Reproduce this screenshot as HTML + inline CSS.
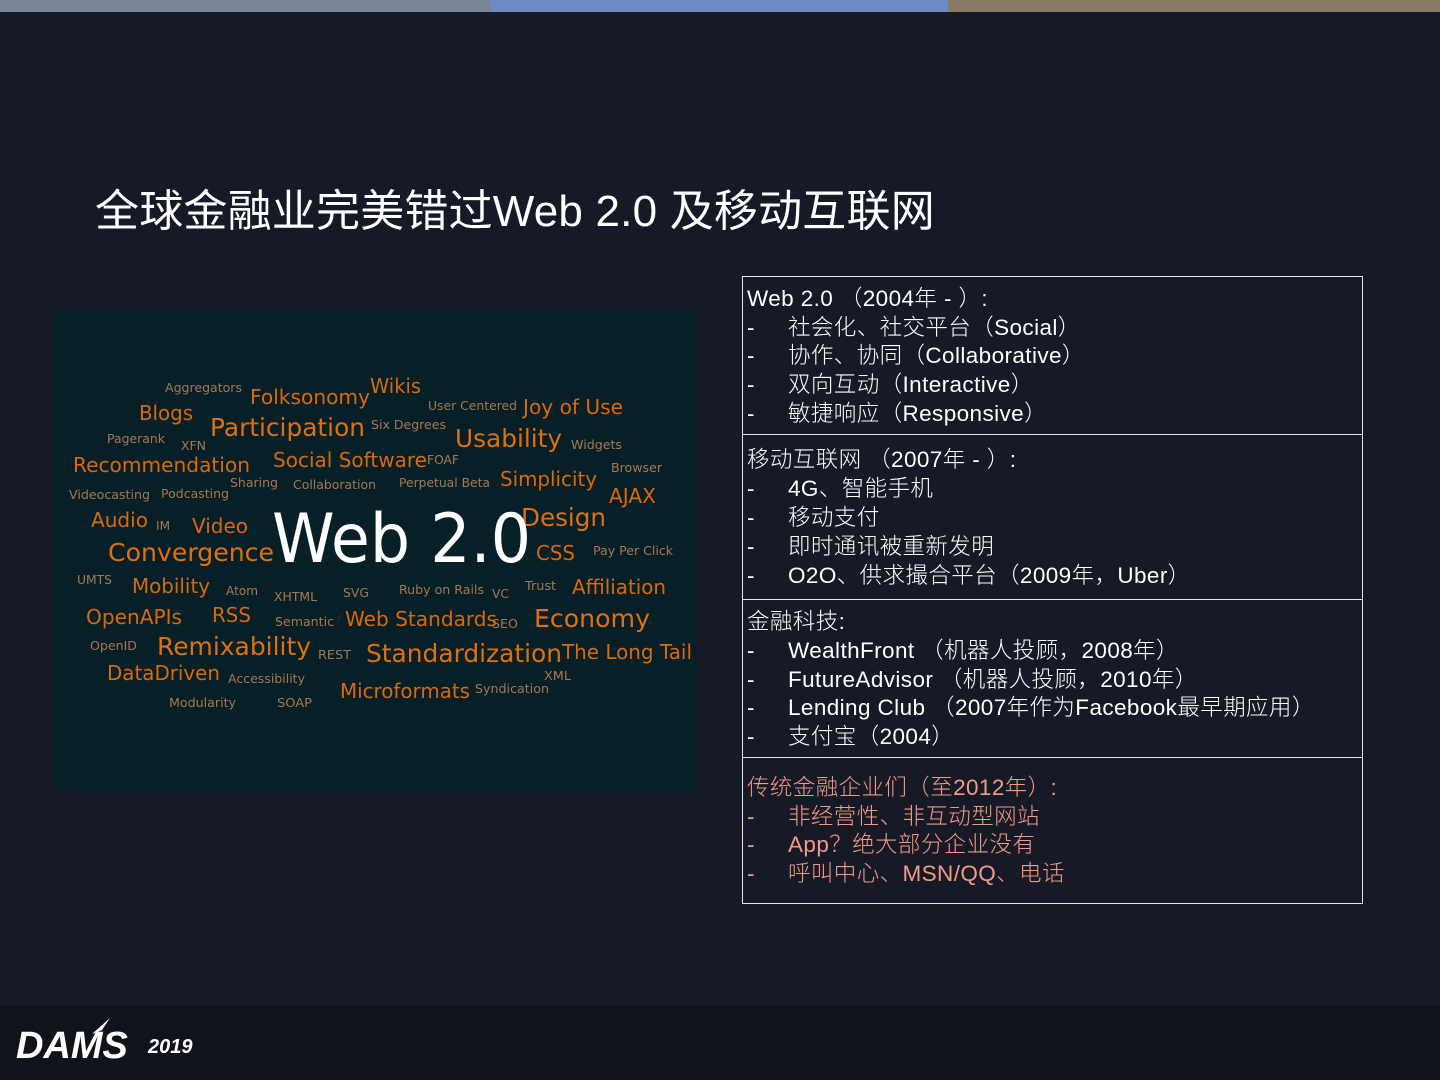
<!DOCTYPE html>
<html><head><meta charset="utf-8"><style>
body{margin:0;width:1440px;height:1080px;background:#161a26;position:relative;overflow:hidden;font-family:"Liberation Sans","Noto Sans CJK SC",sans-serif;color:#fff}
.bar{position:absolute;top:0;height:12px}
.title{position:absolute;left:95px;top:184px;font-size:44px;line-height:56px;white-space:nowrap;letter-spacing:0.2px;font-family:"Liberation Sans","Noto Sans CJK SC",sans-serif}
.cloud{position:absolute;left:53px;top:311px;width:643px;height:481px;background:#072028}
.box{position:absolute;left:742px;width:619px;border:1px solid #e8e8e8;border-bottom:none}
.l{position:absolute;font-size:22.5px;line-height:29px;white-space:nowrap;font-weight:300;letter-spacing:0.4px}
.d{left:747px}
.t{left:788px}
.s{color:#f49a86}
.foot{position:absolute;left:0;top:1005px;width:1440px;height:75px;background:#11131c}
</style></head><body>
<div class="bar" style="left:0;width:491px;background:#7c8598"></div>
<div class="bar" style="left:491px;width:457px;background:#6b8cc6"></div>
<div class="bar" style="left:948px;width:492px;background:#8a7a65"></div>
<div class="title">全球金融业完美错过Web 2.0 及移动互联网</div>
<div class="cloud"></div>
<svg style="position:absolute;left:0;top:0" width="1440" height="1080" font-family="DejaVu Sans, sans-serif">
<g fill="#a97850" font-size="12">
<text x="165" y="392" textLength="77" lengthAdjust="spacingAndGlyphs">Aggregators</text>
<text x="428" y="410" textLength="89" lengthAdjust="spacingAndGlyphs">User Centered</text>
<text x="371" y="429" textLength="75" lengthAdjust="spacingAndGlyphs">Six Degrees</text>
<text x="571" y="449" textLength="51" lengthAdjust="spacingAndGlyphs">Widgets</text>
<text x="107" y="443" textLength="58" lengthAdjust="spacingAndGlyphs">Pagerank</text>
<text x="181" y="450" textLength="25" lengthAdjust="spacingAndGlyphs">XFN</text>
<text x="427" y="464" textLength="32" lengthAdjust="spacingAndGlyphs">FOAF</text>
<text x="611" y="472" textLength="51" lengthAdjust="spacingAndGlyphs">Browser</text>
<text x="230" y="487" textLength="48" lengthAdjust="spacingAndGlyphs">Sharing</text>
<text x="293" y="489" textLength="83" lengthAdjust="spacingAndGlyphs">Collaboration</text>
<text x="399" y="487" textLength="91" lengthAdjust="spacingAndGlyphs">Perpetual Beta</text>
<text x="69" y="499" textLength="81" lengthAdjust="spacingAndGlyphs">Videocasting</text>
<text x="161" y="498" textLength="68" lengthAdjust="spacingAndGlyphs">Podcasting</text>
<text x="156" y="530" textLength="14" lengthAdjust="spacingAndGlyphs">IM</text>
<text x="593" y="555" textLength="80" lengthAdjust="spacingAndGlyphs">Pay Per Click</text>
<text x="77" y="584" textLength="35" lengthAdjust="spacingAndGlyphs">UMTS</text>
<text x="226" y="595" textLength="32" lengthAdjust="spacingAndGlyphs">Atom</text>
<text x="274" y="601" textLength="43" lengthAdjust="spacingAndGlyphs">XHTML</text>
<text x="343" y="597" textLength="26" lengthAdjust="spacingAndGlyphs">SVG</text>
<text x="399" y="594" textLength="85" lengthAdjust="spacingAndGlyphs">Ruby on Rails</text>
<text x="492" y="598" textLength="17" lengthAdjust="spacingAndGlyphs">VC</text>
<text x="525" y="590" textLength="31" lengthAdjust="spacingAndGlyphs">Trust</text>
<text x="275" y="626" textLength="59" lengthAdjust="spacingAndGlyphs">Semantic</text>
<text x="492" y="628" textLength="26" lengthAdjust="spacingAndGlyphs">SEO</text>
<text x="90" y="650" textLength="47" lengthAdjust="spacingAndGlyphs">OpenID</text>
<text x="318" y="659" textLength="33" lengthAdjust="spacingAndGlyphs">REST</text>
<text x="228" y="683" textLength="77" lengthAdjust="spacingAndGlyphs">Accessibility</text>
<text x="544" y="680" textLength="27" lengthAdjust="spacingAndGlyphs">XML</text>
<text x="475" y="693" textLength="74" lengthAdjust="spacingAndGlyphs">Syndication</text>
<text x="169" y="707" textLength="67" lengthAdjust="spacingAndGlyphs">Modularity</text>
<text x="277" y="707" textLength="35" lengthAdjust="spacingAndGlyphs">SOAP</text>
</g>
<g fill="#d9690f" font-size="20">
<text x="250" y="404" textLength="120" lengthAdjust="spacingAndGlyphs">Folksonomy</text>
<text x="370" y="393" textLength="51" lengthAdjust="spacingAndGlyphs">Wikis</text>
<text x="523" y="414" textLength="100" lengthAdjust="spacingAndGlyphs">Joy of Use</text>
<text x="139" y="420" textLength="54" lengthAdjust="spacingAndGlyphs">Blogs</text>
<text x="73" y="472" textLength="177" lengthAdjust="spacingAndGlyphs">Recommendation</text>
<text x="273" y="467" textLength="154" lengthAdjust="spacingAndGlyphs">Social Software</text>
<text x="500" y="486" textLength="97" lengthAdjust="spacingAndGlyphs">Simplicity</text>
<text x="609" y="503" textLength="47" lengthAdjust="spacingAndGlyphs">AJAX</text>
<text x="91" y="527" textLength="57" lengthAdjust="spacingAndGlyphs">Audio</text>
<text x="192" y="533" textLength="56" lengthAdjust="spacingAndGlyphs">Video</text>
<text x="536" y="560" textLength="39" lengthAdjust="spacingAndGlyphs">CSS</text>
<text x="132" y="593" textLength="78" lengthAdjust="spacingAndGlyphs">Mobility</text>
<text x="572" y="594" textLength="94" lengthAdjust="spacingAndGlyphs">Affiliation</text>
<text x="86" y="624" textLength="96" lengthAdjust="spacingAndGlyphs">OpenAPIs</text>
<text x="212" y="622" textLength="39" lengthAdjust="spacingAndGlyphs">RSS</text>
<text x="345" y="626" textLength="152" lengthAdjust="spacingAndGlyphs">Web Standards</text>
<text x="562" y="659" textLength="130" lengthAdjust="spacingAndGlyphs">The Long Tail</text>
<text x="107" y="680" textLength="113" lengthAdjust="spacingAndGlyphs">DataDriven</text>
<text x="340" y="698" textLength="130" lengthAdjust="spacingAndGlyphs">Microformats</text>
</g>
<g fill="#e06f10" font-size="25">
<text x="210" y="436" textLength="155" lengthAdjust="spacingAndGlyphs">Participation</text>
<text x="455" y="447" textLength="107" lengthAdjust="spacingAndGlyphs">Usability</text>
<text x="521" y="526" textLength="85" lengthAdjust="spacingAndGlyphs">Design</text>
<text x="108" y="561" textLength="166" lengthAdjust="spacingAndGlyphs">Convergence</text>
<text x="534" y="627" textLength="116" lengthAdjust="spacingAndGlyphs">Economy</text>
<text x="157" y="655" textLength="154" lengthAdjust="spacingAndGlyphs">Remixability</text>
<text x="366" y="662" textLength="196" lengthAdjust="spacingAndGlyphs">Standardization</text>
</g>
<text x="272" y="562" font-size="68" fill="#fff" textLength="259" lengthAdjust="spacingAndGlyphs">Web 2.0</text>
</svg>

<div class="box" style="top:276px;height:158px"></div>
<div class="box" style="top:434px;height:165px"></div>
<div class="box" style="top:599px;height:158px"></div>
<div class="box" style="top:757px;height:145px;border-bottom:1px solid #e8e8e8"></div>

<div class="l d" style="top:284px">Web 2.0 （2004年 - ）:</div>
<div class="l d" style="top:313px">-</div><div class="l t" style="top:313px">社会化、社交平台（Social）</div>
<div class="l d" style="top:341px">-</div><div class="l t" style="top:341px">协作、协同（Collaborative）</div>
<div class="l d" style="top:370px">-</div><div class="l t" style="top:370px">双向互动（Interactive）</div>
<div class="l d" style="top:399px">-</div><div class="l t" style="top:399px">敏捷响应（Responsive）</div>

<div class="l d" style="top:445px">移动互联网 （2007年 - ）:</div>
<div class="l d" style="top:474px">-</div><div class="l t" style="top:474px">4G、智能手机</div>
<div class="l d" style="top:503px">-</div><div class="l t" style="top:503px">移动支付</div>
<div class="l d" style="top:532px">-</div><div class="l t" style="top:532px">即时通讯被重新发明</div>
<div class="l d" style="top:561px">-</div><div class="l t" style="top:561px">O2O、供求撮合平台（2009年，Uber）</div>

<div class="l d" style="top:607px">金融科技:</div>
<div class="l d" style="top:636px">-</div><div class="l t" style="top:636px">WealthFront （机器人投顾，2008年）</div>
<div class="l d" style="top:665px">-</div><div class="l t" style="top:665px">FutureAdvisor （机器人投顾，2010年）</div>
<div class="l d" style="top:693px">-</div><div class="l t" style="top:693px">Lending Club （2007年作为Facebook最早期应用）</div>
<div class="l d" style="top:722px">-</div><div class="l t" style="top:722px">支付宝（2004）</div>

<div class="l d s" style="top:773px">传统金融企业们（至2012年）:</div>
<div class="l d s" style="top:802px">-</div><div class="l t s" style="top:802px">非经营性、非互动型网站</div>
<div class="l d s" style="top:830px">-</div><div class="l t s" style="top:830px">App？绝大部分企业没有</div>
<div class="l d s" style="top:859px">-</div><div class="l t s" style="top:859px">呼叫中心、MSN/QQ、电话</div>

<div class="foot"></div>
<div style="position:absolute;left:16px;top:1024px;font-size:38px;font-weight:bold;font-style:italic;letter-spacing:0;line-height:44px">DAMS</div>
<svg style="position:absolute;left:90px;top:1016px" width="24" height="20"><path d="M2 18 L20 2 L12 14 Z" fill="#fff"/></svg>
<div style="position:absolute;left:148px;top:1035px;font-size:20px;font-weight:bold;font-style:italic;line-height:24px">2019</div>
</body></html>
